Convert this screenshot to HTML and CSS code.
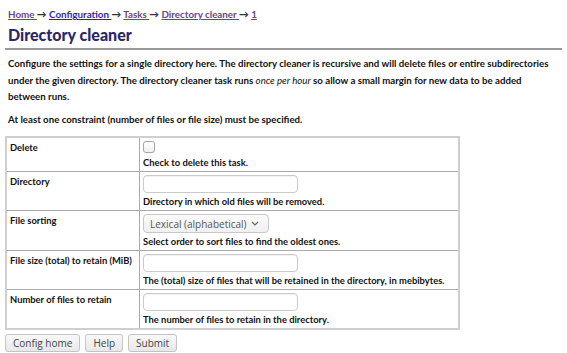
FILE: index.html
```html
<!DOCTYPE html>
<html lang="en">
<head>
  <meta charset="UTF-8" />
  <title>Directory cleaner</title>
  <link rel="stylesheet" href="styles.css">
</head>
<body>
  <div class="crumbs">
    <a href="#" class="seen">Home </a> &rarr; <a href="#">Configuration </a> &rarr; <a href="#" class="seen">Tasks </a> &rarr; <a href="#" class="seen">Directory cleaner </a> &rarr; <a href="#" class="seen">1</a>
  </div>
  <h1>Directory cleaner</h1>

  <p class="intro">Configure the settings for a single directory here. The directory cleaner is recursive and will delete files or entire subdirectories under the given directory. The directory cleaner task runs <em>once per hour</em> so allow a small margin for new data to be added between runs.</p>
  <p class="intro">At least one constraint (number of files or file size) must be specified.</p>

  <form>
    <table class="settings">
      <tr class="first">
        <th>Delete</th>
        <td>
          <input type="checkbox" class="check" />
          <div class="help">Check to delete this task.</div>
        </td>
      </tr>
      <tr>
        <th>Directory</th>
        <td>
          <input type="text" class="field" />
          <div class="help">Directory in which old files will be removed.</div>
        </td>
      </tr>
      <tr>
        <th>File sorting</th>
        <td>
          <div class="select"><span>Lexical (alphabetical)</span>
            <svg class="chev" width="8" height="5" viewBox="0 0 8 5"><path d="M1 1l3 3 3-3" fill="none" stroke="#666" stroke-width="1.2"/></svg>
          </div>
          <div class="help">Select order to sort files to find the oldest ones.</div>
        </td>
      </tr>
      <tr>
        <th>File size (total) to retain (MiB)</th>
        <td>
          <input type="text" class="field" />
          <div class="help">The (total) size of files that will be retained in the directory, in mebibytes.</div>
        </td>
      </tr>
      <tr>
        <th>Number of files to retain</th>
        <td>
          <input type="text" class="field" />
          <div class="help">The number of files to retain in the directory.</div>
        </td>
      </tr>
    </table>

    <div class="actions">
      <button type="button" class="btn">Config home</button>
      <button type="button" class="btn">Help</button>
      <button type="button" class="btn">Submit</button>
    </div>
  </form>
</body>
</html>
```

FILE: styles.css
```css
body {
  margin: 0;
  padding: 5px;
  font-family: Lato, "Liberation Sans", sans-serif;
  font-size: 9.7px;
  color: #111;
}
.crumbs {
  padding: 2px 3px 0;
  font-size: 9.8px;
  line-height: 14px;
  font-weight: bold;
  color: #333;
}
.crumbs a { color: #1f1fe0; }
.crumbs a.seen { color: #6a3f98; }
h1 {
  margin: 0;
  padding: 4px 3px 3px;
  font-size: 16px;
  line-height: 20px;
  font-weight: 900;
  color: #2a2866;
  border-bottom: 2px solid #9a9a9a;
}
.intro {
  margin: 5px 3px 0;
  line-height: 16.5px;
  font-weight: bold;
}
.intro + .intro { margin-top: 6px; }
.intro em { font-weight: normal; font-style: italic; }
.settings {
  margin-top: 9px;
  width: 455px;
  border-collapse: collapse;
  border: 2px solid #cfcfcf;
  font-size: 9.4px;
}
.settings th,
.settings td {
  vertical-align: top;
  text-align: left;
  border: 1px solid #aaa;
  padding: 3px 3px 2px;
}
.settings th {
  width: 126px;
  padding-top: 4px;
  line-height: 12px;
}
.first td { padding-top: 2px; }
.help {
  font-weight: bold;
  line-height: 12px;
  margin-top: 3px;
}
.check {
  appearance: none;
  display: block;
  box-sizing: border-box;
  width: 12px;
  height: 12px;
  margin: 1px 0 4px 0;
  border: 1px solid #a5a5a5;
  border-radius: 3px;
  background: linear-gradient(#fff, #f0f0f0);
}
.field {
  display: block;
  box-sizing: border-box;
  width: 155px;
  height: 18px;
  margin: 0;
  border: 1px solid #cacaca;
  border-radius: 4px;
  background: #fff;
  box-shadow: inset 0 1px 1px rgba(0, 0, 0, 0.06);
}
.select {
  box-sizing: border-box;
  width: 126px;
  height: 19px;
  padding: 0 9px 0 6px;
  border: 1px solid #c8c8c8;
  border-radius: 4px;
  background: linear-gradient(#fafafa, #f0f0f0);
  font-family: "Open Sans", sans-serif;
  font-size: 10px;
  color: #555;
  white-space: nowrap;
  display: flex;
  align-items: center;
  justify-content: space-between;
}
.actions {
  display: flex;
  gap: 5px;
  margin-top: 4px;
}
.btn {
  font-family: "Open Sans", sans-serif;
  font-size: 10px;
  color: #444;
  height: 18px;
  padding: 0 7px;
  border: 1px solid #c4c4c4;
  border-radius: 3px;
  background: linear-gradient(#f8f8f8, #e8e8e8);
}
```
